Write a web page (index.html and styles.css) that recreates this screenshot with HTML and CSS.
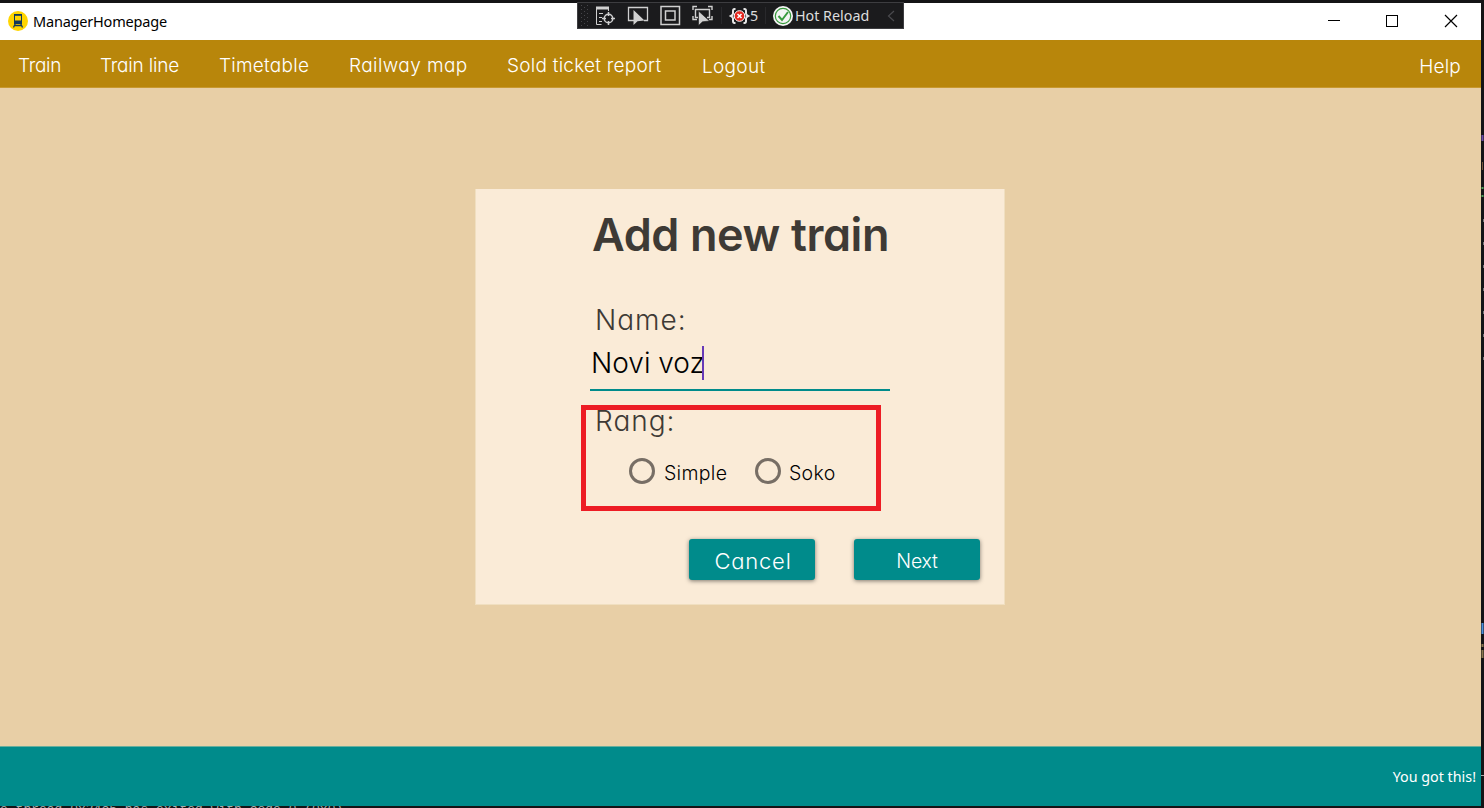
FILE: index.html
```html
<!DOCTYPE html>
<html lang="en">
<head>
<meta charset="utf-8">
<title>ManagerHomepage</title>
<link rel="stylesheet" href="styles.css">
</head>
<body>
<div class="window">
  <header class="titlebar">
    <svg class="app-icon" width="20" height="20" viewBox="0 0 20 20">
      <circle cx="10" cy="10" r="10" fill="#ffd500"/>
      <path d="M6 3h8v10H6z" fill="#12395b"/>
      <path d="M7 4.800h6V9.500H7z" fill="#ffd500"/>
      <path d="M7.300 12.500 5.500 16.500M12.700 12.500l1.800 4M6.500 14.500h7" stroke="#12395b" stroke-width="1.300" fill="none"/>
    </svg>
    <span class="app-name">ManagerHomepage</span>
    <svg class="controls" width="130" height="14" viewBox="0 0 130 14" fill="none" stroke="#000">
      <path d="M0 6.500h12M58.500 1.500h11v11h-11z" shape-rendering="crispEdges"/>
      <path d="M117 1l12 12M129 1l-12 12" stroke-width="1.200"/>
    </svg>
  </header>
  <nav class="menu">
    <a class="m-train">Train</a>
    <a class="m-line">Train line</a>
    <a class="m-time">Timetable</a>
    <a class="m-map">Railway map</a>
    <a class="m-sold">Sold ticket report</a>
    <a class="m-logout">Logout</a>
    <a class="m-help">Help</a>
  </nav>
  <main class="content">
    <form class="card">
      <h1 class="title">Add new train</h1>
      <label class="label name-label">Name:</label>
      <div class="field"><span class="field-text">Novi voz</span><i class="caret"></i></div>
      <label class="label rang-label">Rang:</label>
      <div class="radios">
        <i class="ring"></i><span class="radio-text simple">Simple</span>
        <i class="ring"></i><span class="radio-text soko">Soko</span>
      </div>
      <div class="buttons">
        <div class="button cancel"><span>Cancel</span></div>
        <div class="button next"><span>Next</span></div>
      </div>
      <div class="highlight"></div>
    </form>
  </main>
  <footer class="footer"><span class="status">You got this!</span></footer>
</div>
<div class="toolbar">
  <svg width="326" height="26" viewBox="577 3 326 26" fill="none" stroke="#d0d0d0">
    <path d="M581.500 5v22M584.500 7v20M587.500 5v22" stroke="#46464a" stroke-dasharray="1 3"/>
    <path d="M596 6.500h13v3h-13z" fill="#d0d0d0" stroke="none"/>
    <path d="M596.500 9v15.500h5M599 13.500h4M599 17.500h3M599 21.500h3M608.500 9v2"/>
    <circle cx="608.500" cy="18.500" r="4.300" stroke-width="1.500"/>
    <path d="M608.500 12v4M608.500 21v4M602 18.500h4M611 18.500h4" stroke-width="1.500"/>
    <path d="M634 20.500h-5.500v-13h19v13H644" stroke-width="1.300"/>
    <path d="M633.500 10v15l4-3.700 7-.8z" fill="#d0d0d0" stroke="none"/>
    <path d="M661 6.500h18.500v18H661zM665.500 11h9.500v9h-9.500z" stroke-width="1.500"/>
    <path d="M693 10V6.500h4M708 6.500h4V10M693 16v3.500h4M712 16v3.500h-3" stroke-width="1.400"/>
    <path d="M698 17.500h-2.500v-8h14v8H707" stroke-width="1.400"/>
    <path d="M698.500 11v14.500l4-3.700 7-.8z" fill="#d0d0d0" stroke="#1b1b1d" stroke-width=".6"/>
    <path d="M721.500 7v17M765.500 7v17" stroke="#29292c"/>
    <path d="M735.500 9h-1q-1.500 0-1.500 2v2.500q0 1.500-2 2.500 2 1 2 2.500V21q0 2 1.500 2h1M743.500 9h1q1.500 0 1.500 2v2.500q0 1.500 2 2.500-2 1-2 2.500V21q0 2-1.500 2h-1" stroke="#e8e8e8" stroke-width="2"/>
    <circle cx="739.500" cy="16" r="5.300" fill="#e5281f" stroke="#fff"/>
    <path d="m737.500 14 4 4m0-4-4 4" stroke="#fff" stroke-width="1.500"/>
    <circle cx="783" cy="16" r="10" fill="#f4f4f4" stroke="none"/>
    <circle cx="783" cy="16" r="7.700" stroke="#389a3d" stroke-width="1.200"/>
    <path d="m778.500 16 3.500 4 6-8" stroke="#389a3d" stroke-width="2"/>
    <path d="m894 11-5.500 5 5.500 5" stroke="#4a4a4e" stroke-width="1.200"/>
  </svg>
  <span class="errors">5</span>
  <span class="reload">Hot Reload</span>
</div>
<div class="console">e thread 0x24c5 has exited with code 0 (0x0).</div>
<svg class="editor-edge" width="3" height="720" viewBox="0 88 3 720">
  <path d="M1.500 135v6" stroke="#6b4ca8" stroke-width="2"/>
  <path d="M1.500 162v8" stroke="#75563b"/>
  <path d="M1.500 187v2m0 6v2" stroke="#4ea257" stroke-width="2"/>
  <path d="M2.500 219v146" stroke="#777" stroke-dasharray="3 20"/>
  <path d="M1.500 623v11" stroke="#4b91dc" stroke-width="2"/>
  <path d="M1.500 644v3m0 3v8" stroke="#8a764d" stroke-width="2"/>
  <path d="M0 775.500h3" stroke="#aaa"/>
</svg>
</body>
</html>
```
FILE: styles.css
```css
* { box-sizing: border-box; }
body {
  margin: 0;
  width: 1484px;
  height: 808px;
  overflow: hidden;
  position: relative;
  padding-top: 3px;
  background: #141416;
  font-family: Inter, "Open Sans", sans-serif;
  font-feature-settings: "cv11" 1;
  font-weight: 300;
}
.window { width: 1481px; height: 803px; display: flex; flex-direction: column; }
.titlebar {
  height: 37px;
  flex: none;
  background: #fff;
  display: flex;
  align-items: center;
  padding: 0 23px 2px 8px;
}
.app-icon { flex: none; }
.app-name {
  margin-left: 5px;
  font: 400 14.500px/20px "Noto Sans", sans-serif;
  letter-spacing: -.2px;
  color: #000;
}
.controls { margin-left: auto; }
.menu {
  height: 48px;
  flex: none;
  background: #b8860b;
  border-bottom: 1px solid #c8992f;
  display: flex;
  align-items: center;
  padding: 5px 20px 0 18px;
  color: #fff;
  font-size: 19px;
  line-height: 24px;
  white-space: nowrap;
}
.menu a { flex: none; }
.m-train { width: 82px; letter-spacing: -.3px; }
.m-line { width: 119px; letter-spacing: -.2px; }
.m-time { width: 130px; letter-spacing: .25px; }
.m-map { width: 158px; letter-spacing: .42px; }
.m-sold { width: 195px; letter-spacing: .25px; }
.m-logout { padding-top: 1px; letter-spacing: .3px; }
.m-help { margin-left: auto; padding-top: 1px; letter-spacing: .2px; }
.content { flex: 1; background: #e8cfa6; padding: 101px 0 0 475px; }
.card {
  position: relative;
  width: 530px;
  height: 416px;
  background: #faebd7;
  border: 1px solid #f0dfc0;
  border-top: 0;
  padding: 18px 24px 0 114px;
}
.title { margin: 0; font-size: 45px; line-height: 56px; font-weight: 600; letter-spacing: -.4px; color: #3e3a35; white-space: nowrap; padding-left: 2px; }
.label { display: block; width: max-content; font-size: 28px; line-height: 34px; letter-spacing: 1px; color: #3e3a35; margin-left: 5px; }
.name-label { margin-top: 40px; }
.field { display: flex; align-items: center; width: 300px; height: 54px; border-bottom: 2px solid #008b8b; color: #000; font-size: 28px; line-height: 34px; padding-left: 1px; }
.field-text { width: 111px; white-space: nowrap; }
.caret { width: 2px; height: 34px; background: #673ab7; }
.rang-label { margin-top: 13px; }
.radios { display: flex; align-items: center; height: 26px; margin: 20px 0 0 39px; font-size: 19.500px; color: #000; }
.ring { width: 26px; height: 26px; border: 3px solid #776e65; border-radius: 50%; flex: none; }
.radio-text { margin-left: 9px; line-height: 24px; padding-top: 3px; letter-spacing: .3px; }
.simple { width: 91px; }
.soko { margin-left: 8px; }
.buttons { display: flex; justify-content: flex-end; gap: 39px; margin-top: 55px; }
.button { width: 126px; height: 41px; border-radius: 3px; background: #008b8b; color: #fff; display: flex; align-items: center; justify-content: center; box-shadow: 0 1px 4px rgba(0,0,0,.5); padding-top: 2px; }
.cancel { font-size: 22px; letter-spacing: .8px; padding-left: 2px; }
.next { font-size: 19.500px; letter-spacing: -.2px; }
.highlight { position: absolute; left: 105px; top: 216px; width: 300px; height: 106px; border: 5px solid #ed1c24; }
.footer { height: 60px; flex: none; background: #008b8b; border-top: 1px solid #68ae9b; display: flex; justify-content: flex-end; align-items: center; padding: 0 5px 0 0; }
.status { font: 400 14.300px/20px "Noto Sans", sans-serif; color: #fff; }
.toolbar { position: absolute; left: 577px; top: 2px; width: 327px; height: 27px; background: #1b1b1d; border: 1px solid #3d3d40; font: 400 14.300px/20px "Noto Sans", sans-serif; color: #ddd; }
.toolbar svg { position: absolute; left: -1px; top: 0; }
.errors { position: absolute; left: 172px; top: 3px; }
.reload { position: absolute; left: 217px; top: 3px; white-space: nowrap; }
.console { position: absolute; left: 0; top: 806px; width: 360px; height: 2px; overflow: hidden; font: 13px/8px "Liberation Mono", monospace; color: #aaa; white-space: nowrap; }
.editor-edge { position: absolute; left: 1481px; top: 88px; }
```
